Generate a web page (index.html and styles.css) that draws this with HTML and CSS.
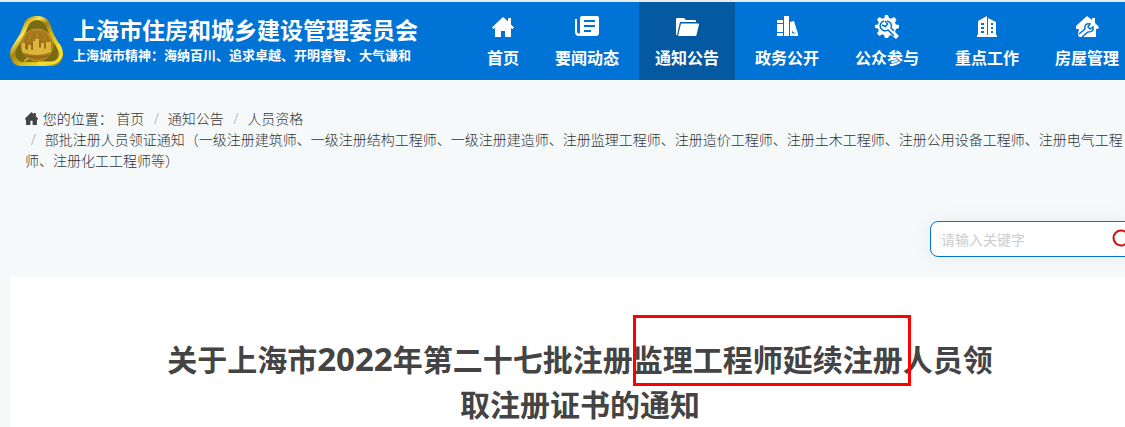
FILE: index.html
```html
<!DOCTYPE html>
<html lang="zh-CN">
<head>
    <meta charset="UTF-8">
    <meta name="viewport" content="width=device-width, initial-scale=1.0">
    <title>上海市住房和城乡建设管理委员会</title>
    <link rel="stylesheet" href="styles.css">
</head>
<body>
    <header class="header">
        <div class="container header-inner">
            <a class="brand" href="#">
                <svg class="brand-logo" viewBox="0 0 54 52" aria-hidden="true">
                    <defs>
                        <linearGradient id="gold" x1="0" y1="0" x2="1" y2="1">
                            <stop offset="0" stop-color="#9a7a08"/>
                            <stop offset="0.2" stop-color="#c9a514"/>
                            <stop offset="0.3" stop-color="#fbe65a"/>
                            <stop offset="0.42" stop-color="#a8830c"/>
                            <stop offset="0.6" stop-color="#d8bb1c"/>
                            <stop offset="0.8" stop-color="#f0dc30"/>
                            <stop offset="1" stop-color="#8a6c0a"/>
                        </linearGradient>
                    </defs>
                    <path d="M14.500 8C17 3 21 1 27 1s10 2 12.500 7L44 20l7 12c2 4 2.500 8 1 12-2 5-6 7-11 7H12c-5 0-9-2-11-7-1.500-4-1-8 1-12l8-13z" fill="url(#gold)"/>
                    <path d="M18 11c2-4 5-6 9-6s7 2 9 6l5 12 6 10c2 4 2 7 1 9-1 3-4 5-8 5H14c-4 0-7-2-8-5s-1-6 1-9l7-12z" fill="#776c14"/>
                    <path d="M15 18c-1 8 0 14 3 19M39 18c1 8 0 14-3 19M14 46c6-3 10-7 13-12" fill="none" stroke="#c9a81a" stroke-width="2"/>
                    <path d="M48 29c3 4 4 8 3 12-2 5-6 7-10 7H28" fill="none" stroke="#f3dd35" stroke-width="3"/>
                    <circle cx="27" cy="30" r="16" fill="#a4761c" stroke="#c99a26"/>
                    <path d="M27 14c-6 3-8 7-8 12M27 14c6 3 8 7 8 12M27 14v10M17 19c-3 3-4 7-4 10M37 19c3 3 4 7 4 10" fill="none" stroke="#bb8b24"/>
                    <path d="M12 28h3v6h3v-4h3v5h2v-9h2v-2h4v8h2v-4h3v5h2v-6h5v10c-9 4-20 4-29 0z" fill="#dbb63a"/>
                    <path d="M17 29v6M22 27v8M30 25v8M35 29v5" fill="none" stroke="#8a6215"/>
                    <path d="M13 40c9 3 19 3 28 0" fill="none" stroke="#8a6215"/>
                </svg>
                <span class="brand-text">
                    <span class="brand-name">上海市住房和城乡建设管理委员会</span>
                    <span class="brand-slogan">上海城市精神：海纳百川、追求卓越、开明睿智、大气谦和</span>
                </span>
            </a>
            <nav class="nav">
                <a class="nav-item" href="#">
                    <svg class="nav-icon" viewBox="0 0 24 24" aria-hidden="true">
                        <path d="M12 2L1 12.500l1.500 1.500L4 13v9h6v-6h4v6h6v-9l1.500 1 1.500-1.500-3-3V3h-3v3.500z"/>
                    </svg>
                    首页
                </a>
                <a class="nav-item" href="#">
                    <svg class="nav-icon" viewBox="0 0 24 24" aria-hidden="true">
                        <path fill-rule="evenodd" d="M7 1h15a2 2 0 0 1 2 2v15a3 3 0 0 1-3 3H4a4 4 0 0 1-4-4V4h2v13a2 2 0 0 0 3 1V3a2 2 0 0 1 2-2zM9 5v2h11V5zM9 10v2h11v-2zM9 15v2h7v-2z"/>
                    </svg>
                    要闻动态
                </a>
                <a class="nav-item active" href="#">
                    <svg class="nav-icon" viewBox="0 0 24 24" aria-hidden="true">
                        <path d="M1 20V4a1 1 0 0 1 1-1h7l2 2h9a1 1 0 0 1 1 1v1H5L2 20z"/>
                        <path d="M6 8.500h17a1 1 0 0 1 1 1L21.500 20a1 1 0 0 1-1 1H3z"/>
                    </svg>
                    通知公告
                </a>
                <a class="nav-item" href="#">
                    <svg class="nav-icon" viewBox="0 0 24 24" aria-hidden="true">
                        <path d="M2 5h6v3H2zM2 9h6v8H2zM2 18h6v3H2zM9 1h5v20H9z"/>
                        <path fill-rule="evenodd" d="M15 7l4-1 4 13v2h-8zM17 16v2l4 1z"/>
                    </svg>
                    政务公开
                </a>
                <a class="nav-item" href="#">
                    <svg class="nav-icon" viewBox="0 0 24 24" aria-hidden="true">
                        <path d="M10 0h3l1 3 2 .8L19 2l2.500 2.500L20 7.400l.8 2L24 10v3l-3 1-1 3 4 4-3 3-5-4-2 1-1 2h-3l-1-3-2-.8L4.500 21 2 18.500l1.800-2.900-.8-2L0 13v-3l3-.6.8-2L2 4.500 4.500 2l2.900 1.800 2-.8z"/>
                        <path class="cut" d="M9 6a5 5 0 1 0 4 9l6 6M10 6l2.500 3-2 2.500L7 10M12 6a5 5 0 0 1 4 7l3 3"/>
                    </svg>
                    公众参与
                </a>
                <a class="nav-item" href="#">
                    <svg class="nav-icon" viewBox="0 0 24 24" aria-hidden="true">
                        <path fill-rule="evenodd" d="M2 20h1V6l9-5v19h1V3l8 4v13h1v2H2zM6 8v2h3V8zM6 12v2h3v-2zM6 16v2h3v-2zM16 8v2h2V8zM16 12v2h2v-2zM16 16v2h2v-2z"/>
                    </svg>
                    重点工作
                </a>
                <a class="nav-item" href="#">
                    <svg class="nav-icon" viewBox="0 0 24 24" aria-hidden="true">
                        <path d="M12 1l5 4V3h3v5l4 4-1 2h-2v8H4l-1-3 1-5H1v-3z"/>
                        <path class="cut" d="M4 19l6-5c-1-4 2-6 5-5l-2 3 2 2 3-2c1 4-2 5-5 5l-6 5"/>
                    </svg>
                    房屋管理
                </a>
            </nav>
        </div>
    </header>

    <div class="container top">
        <div class="crumbs">
            <svg class="crumbs-icon" viewBox="0 0 12 12" aria-hidden="true">
                <path d="M6 0L0 6v1h1v5h4V8h2v4h4V7h1V6l-2-2V1H8v1z"/>
            </svg>
            <span class="crumbs-label">您的位置：</span>
            <ol class="crumbs-list">
                <li><a href="#">首页</a></li>
                <li><a href="#">通知公告</a></li>
                <li><a href="#">人员资格</a></li>
                <li><a href="#">部批注册人员领证通知（一级注册建筑师、一级注册结构工程师、一级注册建造师、注册监理工程师、注册造价工程师、注册土木工程师、注册公用设备工程师、注册电气工程师、注册化工工程师等）</a></li>
            </ol>
        </div>

        <form class="search">
            <input class="search-input" type="text" placeholder="请输入关键字" aria-label="请输入关键字">
            <button class="search-btn" type="submit" aria-label="搜索">
                <svg viewBox="0 0 20 20" aria-hidden="true">
                    <circle cx="9" cy="9" r="7.500"/>
                    <path d="M14 15l4 4"/>
                </svg>
            </button>
        </form>
    </div>

    <main class="container article">
        <h1 class="article-title">关于上海市<span class="year">2022</span>年第二十七批注册<span class="mark">监理工程师延续注册</span>人员领取注册证书的通知</h1>
    </main>
</body>
</html>
```
FILE: styles.css
```css
* {
    margin: 0;
    padding: 0;
    box-sizing: border-box;
}

body {
    background-color: #f5f9fa;
    color: #444;
    font-family: "Noto Sans", "Noto Sans CJK SC", sans-serif;
    font-size: 14px;
    line-height: 21px;
    overflow-x: hidden;
}

a {
    color: inherit;
    text-decoration: none;
}

.container {
    min-width: 1140px;
    margin: 0 10px;
}

/* header */
.header {
    background-color: #0073d7;
    border-top: 2px solid #e4edf2;
}

.header-inner {
    display: flex;
    justify-content: space-between;
    padding-right: 15px;
}

.brand {
    display: flex;
    align-items: center;
    gap: 9px;
    color: #fff;
    font-family: "Noto Sans CJK SC", sans-serif;
    font-weight: bold;
    white-space: nowrap;
}

.brand-logo {
    width: 54px;
    height: 52px;
}

.brand-name {
    display: block;
    font-size: 23px;
    line-height: 28px;
}

.brand-slogan {
    display: block;
    font-size: 13px;
    line-height: 24px;
}

.nav {
    display: flex;
    gap: 4px;
}

.nav-item {
    display: flex;
    flex-direction: column;
    align-items: center;
    gap: 7px;
    padding: 13px 16px 10px;
    color: #fff;
    font-size: 16px;
    font-weight: bold;
    line-height: 24px;
    white-space: nowrap;
}

.nav-item.active {
    background-color: #0559a1;
}

.nav-icon {
    width: 24px;
    height: 24px;
    fill: #fff;
}

.nav-icon .cut {
    fill: none;
    stroke: #0073d7;
    stroke-width: 1.5;
}

/* breadcrumb and search */
.top {
    padding: 28px 15px 20px;
}

.crumbs {
    min-height: 113px;
    font-weight: 300;
}

.crumbs-icon {
    width: 13px;
    height: 13px;
    margin-right: 1px;
    fill: #444;
    vertical-align: -1px;
}

.crumbs-label {
    color: #222;
}

.crumbs-list {
    display: inline;
    list-style: none;
    color: #333;
}

.crumbs-list li {
    display: inline-block;
}

.crumbs-list li + li::before {
    content: "/";
    padding: 0 9px 0 6px;
    color: #aaa;
}

.search {
    display: flex;
    align-items: center;
    width: 205px;
    height: 36px;
    margin-left: auto;
    padding: 0 2px 0 10px;
    background-color: #fff;
    border: 1px solid #0073d7;
    border-radius: 8px;
    box-shadow: 0 0 20px rgba(0, 0, 0, 0.06);
}

.search-input {
    flex: 1;
    min-width: 0;
    border: none;
    outline: none;
    background: none;
    font-family: inherit;
    font-size: 14px;
}

.search-input::placeholder {
    color: #ccc;
}

.search-btn {
    width: 20px;
    height: 20px;
    border: none;
    background: none;
    cursor: pointer;
}

.search-btn svg {
    display: block;
    fill: none;
    stroke: #d01010;
    stroke-width: 2;
}

/* article */
.article {
    padding: 60px 150px 0;
    background-color: #fff;
}

.article-title {
    font-size: 30px;
    line-height: 45px;
    text-align: center;
}

.year {
    font-size: 33px;
    line-height: 1;
}

.mark {
    position: relative;
}

.mark::after {
    content: "";
    position: absolute;
    inset: -24px -8px -6px 0;
    border: 3px solid #f00;
}
```
